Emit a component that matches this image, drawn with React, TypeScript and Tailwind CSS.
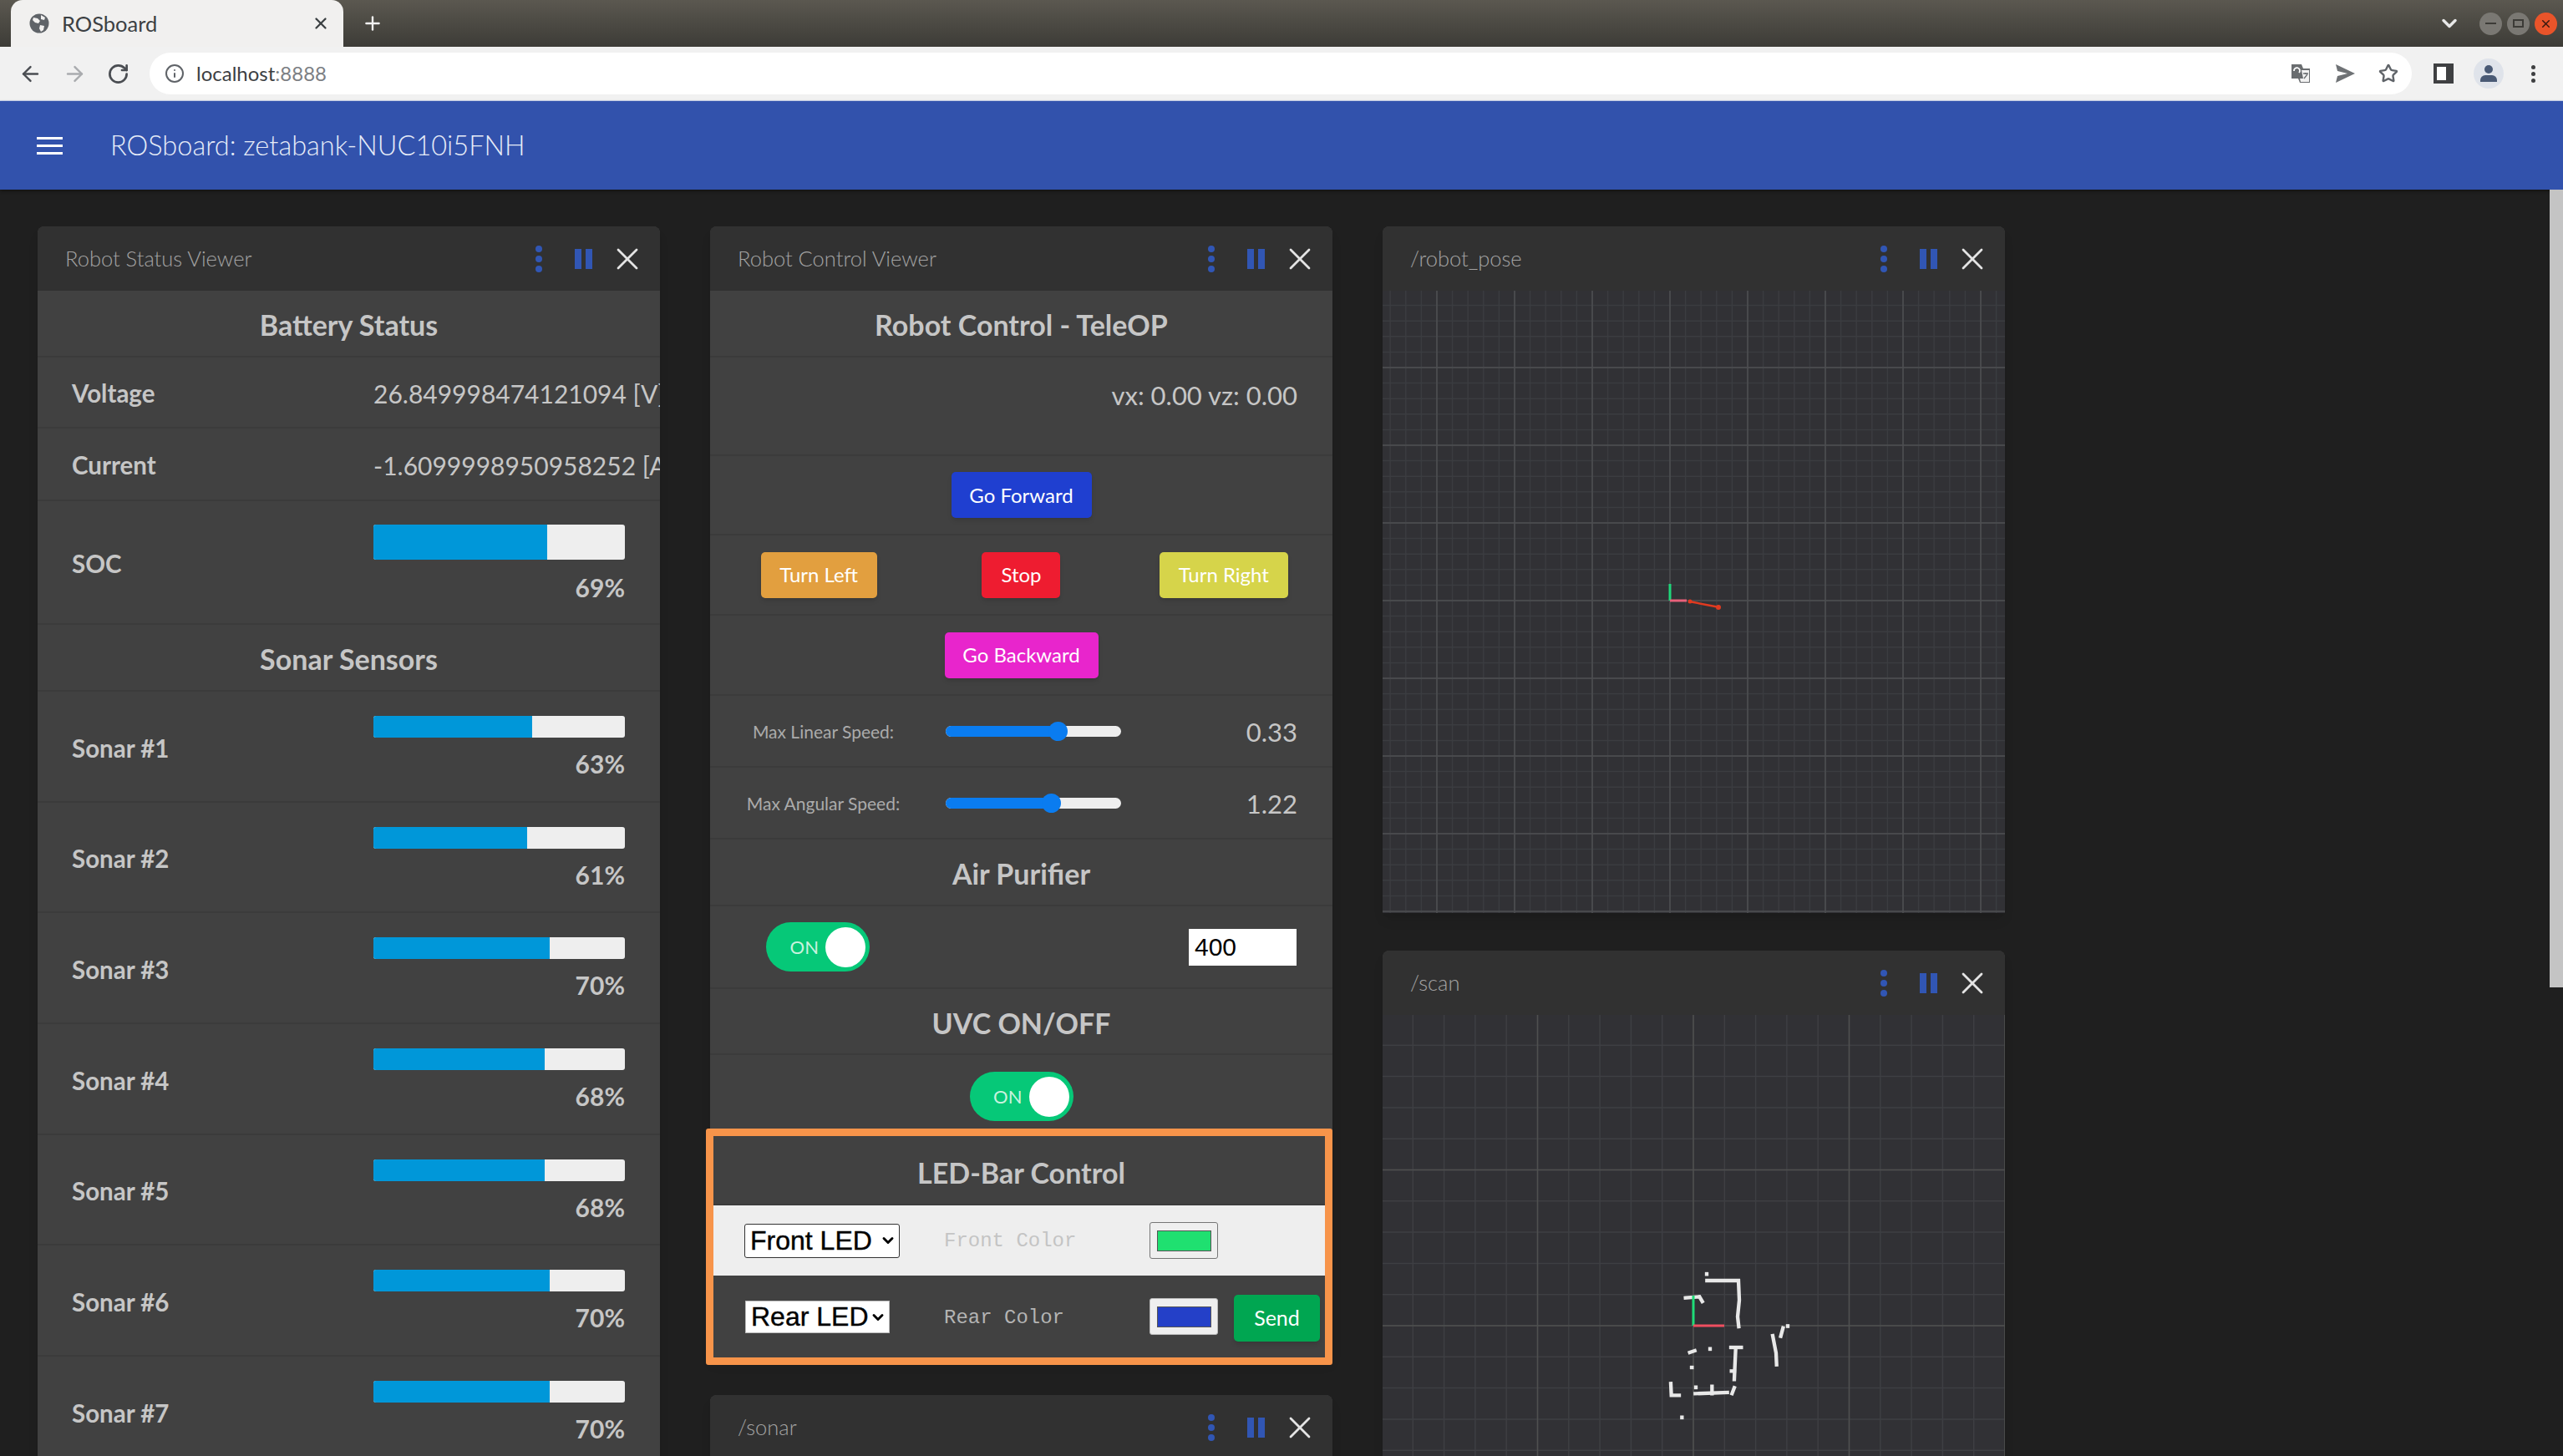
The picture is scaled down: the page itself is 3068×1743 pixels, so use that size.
import React from "react";
import { ArrowLeft, ArrowRight, ChevronDown, Info, Plus, RotateCw, Star, X } from "lucide-react";

const UI_FONT = "font-['Lato','Noto_Sans',sans-serif]";

const sonars = [63, 61, 70, 68, 68, 70, 70, 66];

const range = (step: number, count: number, start = 0) =>
  Array.from({ length: count }, (_, i) => start + i * step);

const CardHeader = ({ title }: { title: string }) => (
  <div className="flex h-[77px] items-center rounded-t-[8px] bg-[#313131] pl-[33px] pr-[17px]">
    <span className="flex-1 text-[25.5px] font-light text-[#a3a3a3]">{title}</span>
    <div className="flex items-center">
      <button className="flex h-[44px] w-[44px] flex-col items-center justify-center gap-[4px] rounded-full">
        <span className="h-[8px] w-[8px] rounded-full bg-[#3156b4]" />
        <span className="h-[8px] w-[8px] rounded-full bg-[#3156b4]" />
        <span className="h-[8px] w-[8px] rounded-full bg-[#3156b4]" />
      </button>
      <button className="ml-[9px] flex h-[44px] w-[44px] items-center justify-center gap-[5px] rounded-full">
        <span className="h-[24px] w-[8px] bg-[#3156b4]" />
        <span className="h-[24px] w-[8px] bg-[#3156b4]" />
      </button>
      <button className="ml-[9px] flex h-[44px] w-[44px] items-center justify-center rounded-full">
        <X size={44} strokeWidth={1.5} className="text-[#e4e4e4]" />
      </button>
    </div>
  </div>
);

const Card = ({ title, children }: { title: string; children?: React.ReactNode }) => (
  <section className="w-[745px] rounded-t-[8px] bg-[#414141] shadow-lg">
    <CardHeader title={title} />
    {children}
  </section>
);

const SectionTitle = ({ children, h = "h-[80px]" }: { children: React.ReactNode; h?: string }) => (
  <div className={`flex ${h} items-center justify-center border-b-2 border-[#3b3b3b] pt-[3px] text-[34px] font-bold text-[#c6c6c6]`}>
    {children}
  </div>
);

const BarRow = ({ label, pct, tall }: { label: string; pct: number; tall?: boolean }) => (
  <div className={`flex border-b-2 border-[#3b3b3b] ${tall ? "h-[148px] pt-[28px]" : "h-[132.7px] pt-[29px]"}`}>
    <div className="flex w-[402px] items-center pb-[24px] pl-[41px] text-[29.5px] font-bold text-[#c6c6c6]">{label}</div>
    <div className="w-[301px]">
      <div className={`flex overflow-hidden rounded-[3px] bg-[#eeeeee] ${tall ? "h-[42px]" : "h-[26px]"}`}>
        <div className="h-full bg-[#0097d9]" style={{ width: `${pct}%` }} />
      </div>
      <div className={`text-right text-[30px] font-bold text-[#c6c6c6] ${tall ? "mt-[11px]" : "mt-[9px]"}`}>{pct}%</div>
    </div>
  </div>
);

// long values run past the card edge and get cut there
const TextRow = ({ label, value, h }: { label: string; value: string; h: string }) => (
  <div className={`flex ${h} items-center overflow-hidden whitespace-nowrap border-b-2 border-[#3b3b3b] pt-[4px]`}>
    <div className="w-[402px] shrink-0 pl-[41px] text-[29.5px] font-bold text-[#c6c6c6]">{label}</div>
    <div className="text-[30px] text-[#c6c6c6]">{value}</div>
  </div>
);

const ActionButton = ({ children, className }: { children: React.ReactNode; className: string }) => (
  <button className={`flex h-[55px] items-center justify-center rounded-[5px] text-[24px] text-white shadow-md ${className}`}>
    {children}
  </button>
);

const SpeedRow = ({ label, value, thumb }: { label: string; value: string; thumb: number }) => (
  <div className="flex h-[86px] items-center border-b-2 border-[#3b3b3b] pr-[42px]">
    <div className="mr-[11px] w-[271px] pt-[2px] text-center text-[21px] text-[#ababab]">{label}</div>
    <div className="relative h-[13px] w-[210px] rounded-full bg-[#eeeeee]">
      <div className="h-full rounded-full bg-[#0a7cf0]" style={{ width: thumb }} />
      <div className="absolute top-[-5px] h-[23px] w-[23px] rounded-full bg-[#0a7cf0]" style={{ left: thumb - 11 }} />
    </div>
    <div className="flex-1 pt-[3px] text-right text-[31px] text-[#c6c6c6]">{value}</div>
  </div>
);

const Toggle = () => (
  <div className="flex h-[59px] w-[124px] items-center justify-end rounded-full bg-[#06c878] pr-[5px]">
    <span className="mr-[8px] text-[22px] text-[#c8f2de]">ON</span>
    <span className="h-[48px] w-[48px] rounded-full bg-white" />
  </div>
);

const Swatch = ({ color, dark }: { color: string; dark?: boolean }) => (
  <div className={`flex h-[44px] w-[82px] items-center justify-center rounded-[3px] border bg-[#efefef] ${dark ? "border-[#bbbbbb]" : "border-[#767676]"}`}>
    <div className={`h-[25px] w-[65px] border border-[#555555] ${color}`} />
  </div>
);

const LedSelect = ({ label, className }: { label: string; className: string }) => (
  <div className="relative">
    <select
      defaultValue={label}
      className={`block appearance-none bg-white pl-[6px] font-['Liberation_Sans',sans-serif] text-[32px] leading-none text-black [-webkit-text-stroke:0.4px_black] ${className}`}
    >
      <option>{label}</option>
    </select>
    <ChevronDown size={20} strokeWidth={3.5} className="pointer-events-none absolute right-[4px] top-[10px] text-black" />
  </div>
);

const Grid = ({ minor, major, size, minorColor, majorColor, ox, oy, children }: {
  minor: number; major: number; size: number; minorColor: string; majorColor: string; ox: number; oy: number; children: React.ReactNode;
}) => {
  const lines = (o: number, step: number) => range(step, 60).map((i) => o - step * 30 + i).filter((v) => v >= 0 && v <= size);
  return (
    <svg width={745} height={size} viewBox={`0 0 745 ${size}`} className="block bg-[#313135]">
      {lines(ox, minor).map((x) => <line key={`vm${x}`} x1={x} x2={x} y1={0} y2={size} stroke={minorColor} strokeWidth={1.5} />)}
      {lines(oy, minor).map((y) => <line key={`hm${y}`} x1={0} x2={745} y1={y} y2={y} stroke={minorColor} strokeWidth={1.5} />)}
      {lines(ox, major).map((x) => <line key={`vM${x}`} x1={x} x2={x} y1={0} y2={size} stroke={majorColor} strokeWidth={1.5} />)}
      {lines(oy, major).map((y) => <line key={`hM${y}`} x1={0} x2={745} y1={y} y2={y} stroke={majorColor} strokeWidth={1.5} />)}
      {children}
    </svg>
  );
};

// scan points were read off a 3x crop, origin at 383,322
const scanLines = [
  "432,160 545,160 548,230 542,290 546,325",
  "355,222 405,218 415,235",
  "431,136 431,137",
  "370,418 388,412",
  "443,405 443,406",
  "377,472 378,472",
  "518,400 555,400",
  "535,405 530,515",
  "520,485 530,485",
  "302,530 304,572 332,572",
  "392,543 392,544",
  "390,566 505,562",
  "450,540 450,566",
  "530,545 522,566",
  "342,651 342,652",
  "668,358 680,420 682,462",
  "697,360 705,330",
  "722,323 722,324",
];

const BrowserChrome = () => (
  <header className="font-['Lato','Noto_Sans',sans-serif]">
    <div className="flex h-[56px] items-end bg-gradient-to-b from-[#5b5850] to-[#3d3c37] pl-[13px]">
      <div className="flex h-[56px] w-[398px] items-center rounded-t-[14px] bg-[#f1f0ef] pl-[22px] pr-[16px]">
        <svg width="24" height="24" viewBox="0 0 24 24">
          <circle cx="12" cy="12" r="11.5" fill="#5f6368" />
          <path d="M5 5l5 1 3 3-2 3-4-1-3-3zM13 14l5 1-1 5-3 2-2-4zM14 2l5 3-1 3-4-1z" fill="#f1f0ef" />
        </svg>
        <span className="ml-[15px] flex-1 text-[25.5px] text-[#3c4043]">ROSboard</span>
        <X size={22} strokeWidth={2.5} className="text-[#3c4043]" />
      </div>
      <div className="flex h-[56px] flex-1 items-center">
        <Plus size={26} strokeWidth={2.2} className="ml-[22px] text-[#f1f1f1]" />
        <div className="flex-1" />
        <ChevronDown size={28} strokeWidth={3} className="mr-[22px] text-[#e8e8e8]" />
        <div className="mr-[6px] flex h-[27px] w-[27px] items-center justify-center rounded-full bg-[#7a7873]">
          <span className="h-[2px] w-[13px] bg-[#3c3b37]" />
        </div>
        <div className="mr-[6px] flex h-[27px] w-[27px] items-center justify-center rounded-full bg-[#7a7873]">
          <span className="h-[10px] w-[13px] border-2 border-[#3c3b37]" />
        </div>
        <div className="mr-[7px] flex h-[27px] w-[27px] items-center justify-center rounded-full bg-[#e9542a]">
          <X size={15} strokeWidth={2.5} className="text-[#3c1a10]" />
        </div>
      </div>
    </div>
    <div className="flex h-[65px] items-center border-b border-[#c9d4ee] bg-[#f1f1f1] pl-[22px]">
      <ArrowLeft size={29} strokeWidth={2} className="text-[#4a4d52]" />
      <ArrowRight size={29} strokeWidth={2} className="ml-[24px] text-[#a9abae]" />
      <RotateCw size={27} strokeWidth={2.4} className="ml-[24px] text-[#4a4d52]" />
      <div className="ml-[24px] flex h-[50px] w-[2708px] items-center rounded-full bg-white pl-[18px] pr-[16px]">
        <Info size={24} strokeWidth={2} className="text-[#5f6368]" />
        <span className="ml-[14px] flex-1 text-[24px] text-[#3c4043]">localhost<span className="text-[#7c7f84]">:8888</span></span>
        <svg width="24" height="24" viewBox="0 0 24 24" className="mr-[29px]">
          <path d="M1 1h12l2 5h8v17H11l-2-5H1z" fill="#6a6d70" />
          <path d="M13 8h9v14H12l-1-4h4z" fill="#f2f2f2" />
          <path d="M4 9a3.5 3.5 0 1 1 6 2" fill="none" stroke="#fff" strokeWidth="1.8" />
          <path d="M15 12h6M18 11v2M16 18l4-5" stroke="#6a6d70" strokeWidth="1.3" />
        </svg>
        <svg width="24" height="22" viewBox="0 0 24 22" className="mr-[28px]">
          <path d="M1 0l23 11L1 22l2-8 12-3L3 8z" fill="#6f7275" />
        </svg>
        <Star size={24} strokeWidth={2.4} className="text-[#5f6368]" />
      </div>
      <div className="ml-[26px] flex h-[24px] w-[24px] justify-start border-[4px] border-[#3f4042] bg-[#3f4042]">
        <span className="h-full w-[11px] bg-white" />
      </div>
      <div className="ml-[24px] flex h-[36px] w-[36px] flex-col items-center justify-center rounded-full bg-[#dfe3ea]">
        <span className="h-[10px] w-[10px] rounded-full bg-[#4a5a75]" />
        <span className="mt-[2px] h-[8px] w-[20px] rounded-t-[6px] bg-[#4a5a75]" />
      </div>
      <div className="ml-[33px] flex flex-col gap-[3px]">
        <span className="h-[5px] w-[5px] rounded-full bg-[#3f4042]" />
        <span className="h-[5px] w-[5px] rounded-full bg-[#3f4042]" />
        <span className="h-[5px] w-[5px] rounded-full bg-[#3f4042]" />
      </div>
    </div>
  </header>
);

export default function App() {
  return (
    <div className={`flex h-[1743px] w-[3068px] flex-col overflow-hidden bg-[#1f1f1f] ${UI_FONT}`}>
      <BrowserChrome />
      <div className="flex h-[106px] shrink-0 items-center bg-[#3252ac] pl-[44px] shadow-[0_2px_4px_rgba(0,0,0,0.4)]">
        <div className="flex h-[21px] w-[31px] flex-col justify-between">
          <span className="h-[3px] bg-white" />
          <span className="h-[3px] bg-white" />
          <span className="h-[3px] bg-white" />
        </div>
        <h1 className="ml-[57px] text-[32.5px] font-light text-[#e6ecf8]">ROSboard: zetabank-NUC10i5FNH</h1>
      </div>
      <div className="flex min-h-0 flex-1">
        <main className="flex flex-1 items-start gap-[60px] overflow-hidden pl-[45px] pt-[44px]">
          <div className="flex flex-col gap-[45px]">
            <Card title="Robot Status Viewer">
              <SectionTitle>Battery Status</SectionTitle>
              <TextRow label="Voltage" value="26.849998474121094 [V]" h="h-[85px]" />
              <TextRow label="Current" value="-1.6099998950958252 [A]" h="h-[87px]" />
              <BarRow label="SOC" pct={69} tall />
              <SectionTitle>Sonar Sensors</SectionTitle>
              {sonars.map((pct, i) => (
                <BarRow key={i} label={`Sonar #${i + 1}`} pct={pct} />
              ))}
            </Card>
          </div>

          <div className="flex flex-col gap-[45px]">
            <Card title="Robot Control Viewer">
              <SectionTitle>Robot Control - TeleOP</SectionTitle>
              <div className="h-[118px] border-b-2 border-[#3b3b3b] pr-[42px] pt-[22px] text-right text-[31px] text-[#c6c6c6]">
                vx: 0.00 vz: 0.00
              </div>
              <div className="flex h-[95px] items-center justify-center border-b-2 border-[#3b3b3b]">
                <ActionButton className="w-[168px] bg-[#1f3fd0]">Go Forward</ActionButton>
              </div>
              <div className="grid h-[96px] grid-cols-3 items-center justify-items-center border-b-2 border-[#3b3b3b] px-[9px]">
                <ActionButton className="w-[139px] bg-[#e29f3f]">Turn Left</ActionButton>
                <ActionButton className="w-[94px] bg-[#ee1c30]">Stop</ActionButton>
                <ActionButton className="w-[154px] bg-[#d6d44a]">Turn Right</ActionButton>
              </div>
              <div className="flex h-[96px] items-center justify-center border-b-2 border-[#3b3b3b]">
                <ActionButton className="w-[184px] bg-[#e825cc]">Go Backward</ActionButton>
              </div>
              <SpeedRow label="Max Linear Speed:" value="0.33" thumb={134} />
              <SpeedRow label="Max Angular Speed:" value="1.22" thumb={126} />
              <SectionTitle>Air Purifier</SectionTitle>
              <div className="flex h-[99px] items-center justify-between border-b-2 border-[#3b3b3b] pl-[67px] pr-[43px]">
                <Toggle />
                <input
                  readOnly
                  value="400"
                  className="h-[44px] w-[129px] bg-white px-[7px] font-['Liberation_Sans',sans-serif] text-[30px] text-black"
                />
              </div>
              <SectionTitle h="h-[79px]">UVC ON/OFF</SectionTitle>
              <div className="flex h-[99px] items-center justify-center">
                <Toggle />
              </div>
              <div className="relative">
                <SectionTitle h="h-[81px]">LED-Bar Control</SectionTitle>
                <div className="flex h-[84px] items-center bg-[#eeeeee] pl-[41px]">
                  <LedSelect label="Front LED" className="h-[41px] w-[186px] rounded-[3px] border border-[#333333]" />
                  <span className="ml-[53px] w-[246px] pt-[2px] font-['Liberation_Mono',monospace] text-[24px] text-[#c4c4c4]">Front Color</span>
                  <Swatch color="bg-[#1fe070]" />
                </div>
                <div className="flex h-[98px] items-center pl-[42px]">
                  <LedSelect label="Rear LED" className="h-[39px] w-[173px] border border-[#bbbbbb]" />
                  <span className="ml-[65px] w-[246px] pt-[4px] font-['Liberation_Mono',monospace] text-[24px] text-[#b4b4b4]">Rear Color</span>
                  <Swatch color="bg-[#2440c8]" dark />
                  <button className="ml-[19px] mt-[3px] flex h-[56px] w-[103px] items-center justify-center rounded-[5px] bg-[#00a651] text-[25px] text-white shadow-md">
                    Send
                  </button>
                </div>
                {/* annotation frame drawn over the LED section */}
                <div className="pointer-events-none absolute bottom-[-9px] left-[-5px] right-0 top-[-11px] rounded-[3px] border-[9px] border-[#f7944a]" />
              </div>
            </Card>
            <Card title="/sonar" />
          </div>

          <div className="flex flex-col gap-[45px]">
            <Card title="/robot_pose">
              <Grid minor={18.6} major={93} size={745} minorColor="#3b3c40" majorColor="#4e4f52" ox={344} oy={371}>
                <line x1={344} x2={344} y1={351} y2={371} stroke="#1fd67a" strokeWidth={3} />
                <line x1={344} x2={364} y1={371} y2={371} stroke="#e8607a" strokeWidth={3} />
                <line x1={367} x2={403} y1={372} y2={379} stroke="#e03a20" strokeWidth={2.5} />
                <circle cx={368} cy={372} r={2.5} fill="#e03a20" />
                <circle cx={402} cy={379} r={3} fill="#e03a20" />
              </Grid>
            </Card>
            <Card title="/scan">
              <Grid minor={37.3} major={186.5} size={745} minorColor="#3e3f43" majorColor="#4f504f" ox={372} oy={372}>
                <g transform="translate(372 372) scale(0.3333) translate(-383 -322)" fill="none" stroke="#e8e8e8" strokeWidth={13} strokeLinecap="square">
                  {scanLines.map((points) => <polyline key={points} points={points} />)}
                </g>
                <line x1={372} x2={372} y1={336} y2={372} stroke="#1fdc78" strokeWidth={3} />
                <line x1={372} x2={409} y1={372} y2={372} stroke="#ef4f60" strokeWidth={3} />
              </Grid>
            </Card>
          </div>
        </main>
        <div className="w-[16px] shrink-0">
          <div className="h-[955px] bg-[#c4c4c4]" />
        </div>
      </div>
    </div>
  );
}
